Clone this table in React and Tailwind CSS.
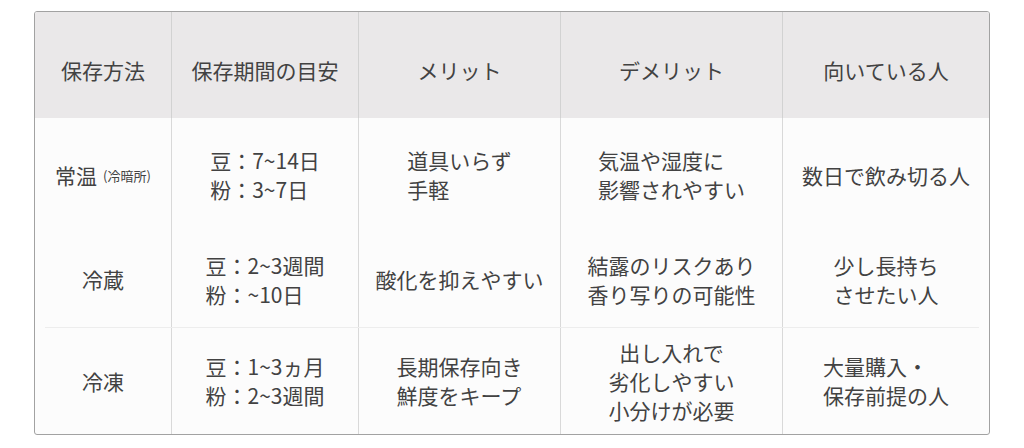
import React from "react";

const headers = ["保存方法", "保存期間の目安", "メリット", "デメリット", "向いている人"];

const rows = [
  {
    h: "h-[114px]",
    cells: [
      "joon",
      ["豆：7~14日", "粉：3~7日"],
      ["道具いらず", "手軽"],
      ["気温や湿度に", "影響されやすい"],
      ["数日で飲み切る人"],
    ],
  },
  {
    h: "h-[95px]",
    cells: [
      ["冷蔵"],
      ["豆：2~3週間", "粉：~10日"],
      ["酸化を抑えやすい"],
      ["結露のリスクあり", "香り写りの可能性"],
      ["少し長持ち", "させたい人"],
    ],
  },
  {
    h: "flex-1",
    line: true,
    cells: [
      ["冷凍"],
      ["豆：1~3ヵ月", "粉：2~3週間"],
      ["長期保存向き", "鮮度をキープ"],
      { center: true, lines: ["出し入れで", "劣化しやすい", "小分けが必要"] },
      ["大量購入・", "保存前提の人"],
    ],
  },
];

const Cell = ({ value, first }) => {
  let content;
  if (value === "joon") {
    content = (
      <span className="flex items-center">
        常温<span className="ml-[6px] text-[13px]">(冷暗所)</span>
      </span>
    );
  } else if (Array.isArray(value)) {
    content = (
      <div className="text-left">
        {value.map((l) => (
          <div key={l}>{l}</div>
        ))}
      </div>
    );
  } else {
    content = (
      <div className="text-center">
        {value.lines.map((l) => (
          <div key={l}>{l}</div>
        ))}
      </div>
    );
  }
  return (
    <div
      className={
        "flex items-center justify-center " +
        (first ? "" : "border-l border-[#d9d9d9]")
      }
    >
      {content}
    </div>
  );
};

export default function App() {
  return (
    <div
      className="w-[1024px] h-[448px] bg-white pt-[11px] pl-[34px] text-[#424242] text-[21px] leading-[29px]"
      style={{ fontFamily: '"Noto Sans CJK JP", "Noto Sans", sans-serif' }}
    >
      <div className="w-[956px] h-[424px] flex flex-col border border-[#a2a2a2] rounded-[3px] overflow-hidden bg-[#fcfcfc]">
        <div className="grid grid-cols-[136px_187px_202px_222px_1fr] h-[106px] bg-[#eae8e9]">
          {headers.map((t, i) => (
            <div
              key={t}
              className={
                "flex items-center justify-center pt-[10px] " +
                (i === 0 ? "" : "border-l border-[#d2d2d2]")
              }
            >
              {t}
            </div>
          ))}
        </div>
        {rows.map((r, ri) => (
          <React.Fragment key={ri}>
            {r.line && <div className="mx-[10px] h-px bg-[#ededed]" />}
            <div className={"grid grid-cols-[136px_187px_202px_222px_1fr] " + r.h}>
              {r.cells.map((c, i) => (
                <Cell key={i} value={c} first={i === 0} />
              ))}
            </div>
          </React.Fragment>
        ))}
      </div>
    </div>
  );
}
